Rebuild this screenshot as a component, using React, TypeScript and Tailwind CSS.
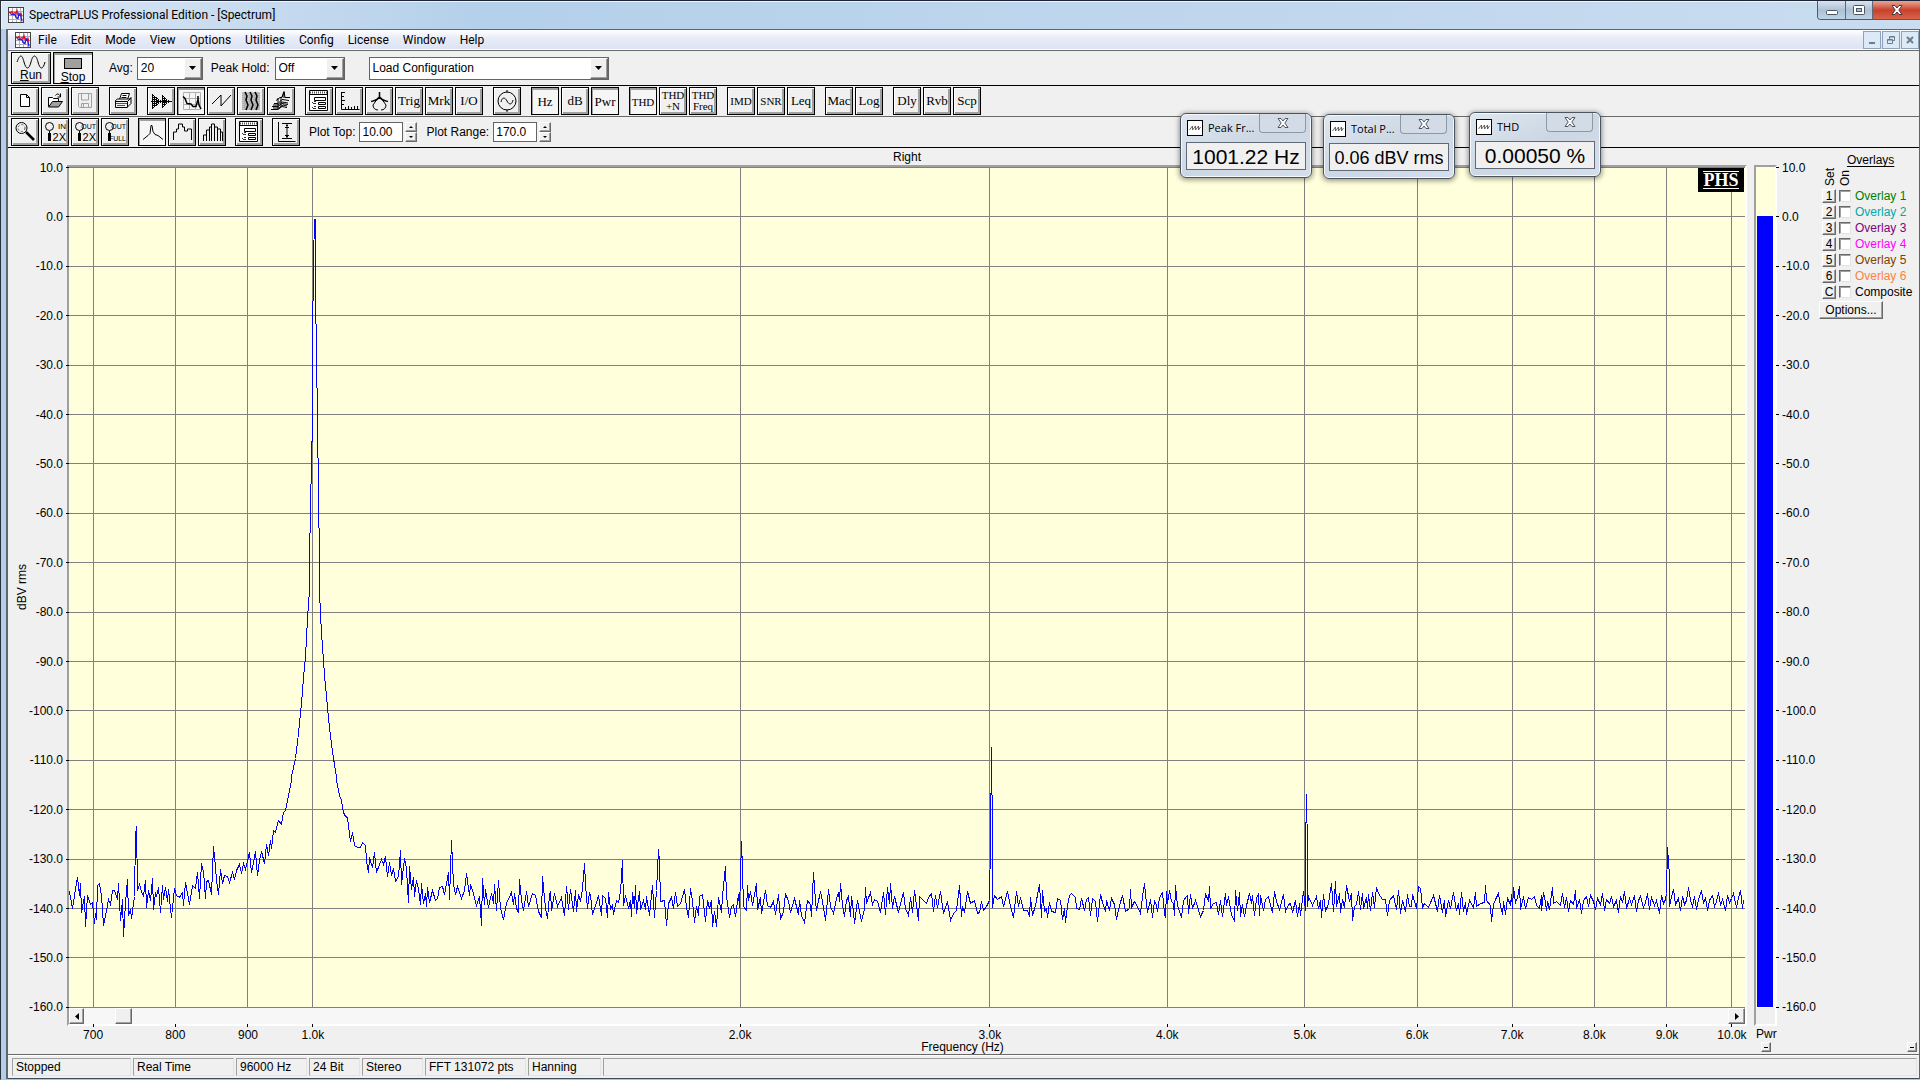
import type { ReactNode } from "react";

const MENUS = ["File", "Edit", "Mode", "View", "Options", "Utilities", "Config", "License", "Window", "Help"];

const OVERLAYS = [
  { key: "1", name: "Overlay 1", color: "text-[#008000]" },
  { key: "2", name: "Overlay 2", color: "text-[#00a8a8]" },
  { key: "3", name: "Overlay 3", color: "text-[#800080]" },
  { key: "4", name: "Overlay 4", color: "text-[#ff00ff]" },
  { key: "5", name: "Overlay 5", color: "text-[#804000]" },
  { key: "6", name: "Overlay 6", color: "text-[#ff8040]" },
  { key: "C", name: "Composite", color: "text-black" },
];

const STATUS = [
  { text: "Stopped", width: "w-[119px]" },
  { text: "Real Time", width: "w-[101px]" },
  { text: "96000 Hz", width: "w-[71px]" },
  { text: "24 Bit", width: "w-[51px]" },
  { text: "Stereo", width: "w-[61px]" },
  { text: "FFT 131072 pts", width: "w-[101px]" },
  { text: "Hanning", width: "w-[73px]" },
  { text: "", width: "flex-1" },
];

const FREQS = [
  { f: 0.7, label: "700" },
  { f: 0.8, label: "800" },
  { f: 0.9, label: "900" },
  { f: 1, label: "1.0k" },
  { f: 2, label: "2.0k" },
  { f: 3, label: "3.0k" },
  { f: 4, label: "4.0k" },
  { f: 5, label: "5.0k" },
  { f: 6, label: "6.0k" },
  { f: 7, label: "7.0k" },
  { f: 8, label: "8.0k" },
  { f: 9, label: "9.0k" },
  { f: 10, label: "10.0k" },
];

const LEVELS = Array.from({ length: 18 }, (_, i) => 10 - i * 10);

// log frequency axis, share of the plot width
const freqX = (f: number) => `${((243.9 + 1419 * Math.log10(f)) / 1676) * 100}%`;
const levelY = (i: number) => `${((i * 49.4 + 0.5) / 841) * 100}%`;

// measured trace, each block has its origin and points in thirds of a unit
const BLOCKS = [
  {
    x: -9,
    y: 613,
    pts: "25,328 30,348 37,385 42,345 53,292 58,346 61,310 65,397 73,350 77,440 83,346 90,372 98,368 103,430 106,400 109,418 113,316 117,310 124,346 131,436 138,390 146,357 151,372 158,332 164,331 172,358 175,310 181,420 186,357 191,470 196,370 202,298 206,405 211,387 215,415 222,350 225,170 229,140 232,330 238,312 245,335 250,348 256,302 260,382 264,332 270,360 276,295 281,388 285,338 289,350 295,322 301,397 306,317 311,357 316,322 322,365 326,328 335,412 343,325 348,345 358,352 366,338 370,375 376,307 383,340 389,373 398,317 406,326 412,277 418,355 425,250 430,275 435,355 440,305 445,300 454,344 460,198 465,262 468,300 475,343 480,268 486,310 494,287 502,290 507,307 518,278 524,297 530,270 538,253 543,280 551,250 556,268 568,217 575,277 580,246 586,213 592,287 598,240 605,213 613,250 618,193 626,226 632,180 635,205 639,152 647,157 654,120 664,132 670,98 677,92 685,45 694,0",
  },
  {
    x: 201,
    y: 393,
    pts: "65,650 77,595 85,520 95,430 100,352 107,290 113,175 117,90 119,0 122,-160 126,-420 128,-650 131,-900 132,-1022 135,-1022 136,-800 139,-620 141,-420 144,-200 149,0 149,95 152,160 155,220 161,300 164,345 170,410 176,475 182,530 190,595 200,650",
  },
  {
    x: -9,
    y: 613,
    pts: "829,0 838,45 845,60 850,98 855,110 862,113 868,160 872,185 877,157 884,197 893,203 900,203 906,187 916,197 920,240 925,277 929,232 936,262 942,217 950,277 963,238 970,253 977,229 983,290 989,247 994,285 1000,265 1007,303 1015,290 1020,210 1025,313 1032,236 1038,265 1041,320 1046,368 1049,260 1054,328 1060,292 1064,350 1070,300 1075,325 1082,372 1085,310 1090,370 1095,340 1099,380 1103,322 1108,367 1118,332 1127,362 1133,355 1138,322 1147,320 1153,343 1160,310 1165,277 1169,357 1175,180 1179,312 1186,342 1193,318 1203,355 1212,330 1220,280 1227,345 1232,312 1237,330 1250,375 1258,350 1264,436 1268,295 1273,372 1277,328 1284,382 1293,340 1300,370 1304,313 1308,392 1316,300 1322,385 1330,418 1338,370 1353,337 1359,372 1364,340 1370,385 1376,398 1379,297 1384,362 1390,390 1398,335 1405,380 1416,340 1427,345 1435,395 1444,412 1448,290 1455,385 1462,415 1467,345 1472,335 1475,390 1483,340 1492,380",
  },
  {
    x: 491,
    y: 673,
    pts: "3,172 12,227 19,138 25,208 31,148 40,215 45,150 50,215 54,162 60,185 67,145 72,70 76,132 82,205 87,157 92,165 98,222 108,187 116,167 125,227 128,165 137,175 143,233 146,158 150,208 158,193 161,223 170,180 175,187 182,155 187,60 190,197 196,165 205,205 210,182 215,230 218,157 224,203 227,135 230,220 238,155 242,207 250,180 256,207 260,170 269,226 276,135 284,232 290,150 295,27 298,65 302,185 312,182 319,255 325,190 334,172 340,205 345,157 352,200 362,190 374,148 380,203 386,233 391,145 397,185 404,248 410,200 415,225 419,168 428,163 436,243 442,182 448,205 454,182 458,260 464,215 469,260 475,172 484,217 488,168 496,80 500,170 508,232 514,200 521,193 527,230 535,162 539,203 542,110 544,5 547,90 551,200 558,210 563,135 566,180 572,155 577,197 588,130 593,207 600,173 605,220 616,150 622,195 632,203 640,185 646,223 654,163 662,237 670,215 675,160 684,185 690,217 702,176 708,200 714,222 718,180 724,225 734,247 741,180 750,192 755,230 760,97 765,180 770,210 782,155 787,185 797,240 805,148 812,200 820,220 828,175 834,157 838,183 842,130 848,195 854,230 860,180 865,170 871,228 874,168 880,215 884,250 893,180 898,215 905,243 912,205 916,142 920,190 930,157 936,193 944,178 953,185 960,217 971,157 977,222 983,142 987,190 992,130 998,205 1004,170 1014,217 1020,190 1031,157 1037,205 1046,225 1052,172 1058,218 1063,150 1076,240 1079,170 1090,182 1100,190 1104,172 1115,160 1121,213 1126,167 1133,202 1142,155 1150,220 1163,183 1172,242 1180,220 1190,210 1199,137 1204,228 1208,200 1214,217 1222,153 1230,190 1243,180 1253,220 1259,217 1264,185 1270,212 1280,200 1289,180 1291,0 1294,-278 1297,0 1298,202 1303,165 1312,178 1323,170 1330,200 1341,155 1350,200 1361,233 1370,153 1376,200 1382,172 1390,210 1402,212 1408,230 1412,172 1417,225 1427,195 1437,133 1443,232 1448,150 1453,215 1460,205 1463,232 1467,188 1475,215 1486,217 1493,175",
  },
  {
    x: 991,
    y: 613,
    pts: "0,362 8,418 13,385 17,428 22,375 28,347 34,340 45,352 50,385 58,387 65,355 72,390 78,358 86,352 92,407 98,355 105,365 113,425 121,343 128,367 136,395 140,360 147,392 155,355 164,372 170,418 178,375 187,347 197,393 208,385 211,328 215,382 222,365 228,372 240,400 248,348 253,310 258,370 263,397 271,357 277,412 282,360 288,375 293,395 297,352 306,337 312,400 317,412 320,333 323,370 328,330 335,365 340,370 343,405 347,316 352,375 364,412 370,362 378,350 382,345 386,400 391,343 397,385 406,362 412,380 421,408 430,390 436,340 446,365 448,318 452,385 460,370 470,367 476,402 480,360 487,410 496,340 500,375 505,350 514,402 524,425 526,330 532,390 537,337 542,410 548,372 553,410 560,375 569,340 574,370 578,346 584,407 590,355 596,340 599,405 601,345 610,390 617,357 626,348 631,375 637,398 643,333 650,365 658,387 670,342 677,395 685,372 690,370 697,397 706,360 712,410 718,370 721,407 730,335 736,390 737,215 739,42 742,215 743,378 746,348 757,375 769,350 775,385 780,362 784,412 790,342 797,395 805,370 814,310 820,393 826,303 830,378 838,340 842,398 846,358 852,382 860,315 868,365 874,340 878,420 884,378 890,372 896,335 901,388 906,340 910,386 918,352 922,385 926,343 931,392 938,337 943,383 949,322 954,340 968,357 975,357 982,405 988,360 1000,347 1010,387 1016,332 1021,400 1026,362 1036,395 1042,343 1048,378 1054,380 1058,343 1068,385 1075,318 1082,325 1087,382 1093,370 1105,382 1120,347 1131,395 1138,345 1147,397 1152,362 1157,410 1164,362 1172,385 1180,338 1188,390 1195,370 1199,402 1204,337 1209,395 1216,367 1220,402 1228,360 1240,382 1246,337 1250,378 1260,370 1272,367 1277,315 1280,362 1290,375 1294,425 1300,372 1307,358 1314,340 1320,375 1327,403 1331,363 1336,402 1342,352 1350,375 1354,343 1358,385 1360,322 1366,367 1372,352 1378,318 1382,387 1390,350 1396,385 1405,352 1413,357 1422,350 1430,375 1439,385 1443,345 1445,392 1450,337 1454,350 1458,392 1462,365 1468,387 1477,322 1481,370 1490,365 1500,375 1507,340 1513,382 1520,352 1526,395 1531,360 1540,372 1546,330 1550,385 1558,357 1565,400 1571,362 1580,350 1585,378 1592,345 1600,365 1606,388 1613,355 1621,372 1627,340 1634,392 1640,358 1648,370 1655,348 1660,380 1668,362 1674,397 1680,350 1688,366 1694,335 1700,385 1707,355 1715,372 1722,345 1728,395 1735,360 1742,350 1749,382 1755,366 1762,340 1769,388 1775,352 1783,375 1790,362 1797,400 1803,345 1810,370 1817,358 1820,340 1823,202 1827,290 1829,380 1834,350 1840,328 1847,372 1854,355 1860,390 1866,348 1873,372 1880,362 1885,322 1890,360 1897,378 1904,350 1910,388 1916,358 1923,330 1929,370 1936,352 1942,392 1949,360 1956,345 1962,380 1969,365 1975,337 1981,375 1988,358 1995,390 2001,345 2008,368 2015,355 2021,340 2028,382 2034,352 2041,330 2046,385 2050,360",
  },
];

const TRACE = BLOCKS.map((b) =>
  b.pts
    .split(" ")
    .map((p) => {
      const [x, y] = p.split(",").map(Number);
      return `${Math.floor(b.x + x / 3)},${Math.floor(b.y + y / 3)}`;
    })
    .join(" ")
).join(" ");

const RAISED = "border border-[#696969] border-l-white border-t-white bg-[#f0f0f0] shadow-[inset_-1px_-1px_0_#a0a0a0]";

function AppIcon() {
  return (
    <svg viewBox="0 0 16 16" className="h-4 w-4 shrink-0" aria-hidden>
      <rect x=".5" y=".5" width="15" height="15" fill="#fff" stroke="#444" />
      <path d="M4.500 1v14M8.500 1v14M12.500 1v14M1 4.500h14M1 8.500h14M1 12.500h14" stroke="#b0b0b0" />
      <path d="M1 5.500h2l1-1 1 2 2-1 1 1 1-3 1 4 2 1 1-2 1 3" fill="none" stroke="#e01030" strokeWidth="1.300" />
      <path d="M2 6.500l2 1h3l1 3 2 1 1-5 2 3 1 5" fill="none" stroke="#2020e0" strokeWidth="1.300" />
    </svg>
  );
}

function Tool({ label, active, children }: { label: string; active?: boolean; children: ReactNode }) {
  return (
    <button
      aria-label={label}
      className={`flex h-7 w-7 shrink-0 items-center justify-center border border-black font-['Liberation_Serif',serif] text-[13px] leading-3 text-black ${
        active
          ? "bg-[#f6f6f6] pt-0.5 shadow-[inset_1px_2px_0_#a0a0a0]"
          : "bg-[#f0f0f0] shadow-[inset_1px_1px_0_#fff,inset_-2px_-2px_0_#a0a0a0]"
      }`}
    >
      {children}
    </button>
  );
}

function Glyph({ children }: { children: ReactNode }) {
  return (
    <svg viewBox="0 0 24 24" className="h-6 w-6 shrink-0" fill="none" stroke="#000" aria-hidden>
      {children}
    </svg>
  );
}

const Small = ({ children }: { children: ReactNode }) => <span className="text-[11px]">{children}</span>;

const SettingsGlyph = () => (
  <Glyph>
    <path d="M2.500 1.500h18v20h-18zM2.500 5.500h18" fill="#fff" />
    <path d="M3 3.500h17" stroke="#555" strokeDasharray="1 1" strokeWidth="2" />
    <path d="M7.500 8.500h11v3h-11zM11.500 13.500h7v2h-7zM11.500 17.500h7v2h-7z" />
    <path d="M5 13.500h1M7 12.500h2M6 14.500h3M5 18.500h1M7 17.500h2M6 19.500h3" stroke="#333" />
  </Glyph>
);

function Zoomer({ top, bottom }: { top: string; bottom: string }) {
  return (
    <svg viewBox="0 0 24 24" className="h-6 w-6 shrink-0" aria-hidden>
      <circle cx="6.500" cy="6.500" r="4" fill="none" stroke="#000" />
      <path d="M6.500 11v2" stroke="#000" />
      <path d="M6.500 13v8" stroke="#000" strokeWidth="3" />
      <text x="23" y="9" textAnchor="end" fontSize={top === "IN" ? 8 : 7} fontFamily="Liberation Sans, sans-serif">
        {top}
      </text>
      <text
        x="23"
        y="21"
        textAnchor="end"
        fontSize={bottom === "2X" ? 11 : 7}
        fontFamily="Liberation Sans, sans-serif"
      >
        {bottom}
      </text>
    </svg>
  );
}

function Dropdown({ label, value, width }: { label: string; value: string; width: string }) {
  return (
    <span className={`relative block h-[23px] ${width}`}>
      <select
        aria-label={label}
        className="h-full w-full appearance-none border border-[#646464] bg-white pl-[3px] text-xs text-black focus:outline-none"
      >
        <option>{value}</option>
      </select>
      <span
        className={`pointer-events-none absolute right-px top-px flex h-[21px] w-[18px] items-center justify-center ${RAISED}`}
      >
        <svg viewBox="0 0 7 4" className="h-1 w-[7px]" aria-hidden>
          <path d="M0 0h7L3.500 4z" />
        </svg>
      </span>
    </span>
  );
}

function NumberBox({ label, value }: { label: string; value: string }) {
  return (
    <div className="flex items-center">
      <label className="flex items-center gap-1">
        {label}
        <input
          defaultValue={value}
          className="h-5 w-11 border border-[#646464] bg-white pl-0.5 text-xs focus:outline-none"
        />
      </label>
      <div className="ml-0.5 flex flex-col">
        <button aria-label={`${label} up`} className={`flex h-2.5 w-3 items-center justify-center ${RAISED}`}>
          <svg viewBox="0 0 4 2" className="h-0.5 w-1" aria-hidden>
            <path d="M0 2h4L2 0z" />
          </svg>
        </button>
        <button aria-label={`${label} down`} className={`flex h-2.5 w-3 items-center justify-center ${RAISED}`}>
          <svg viewBox="0 0 4 2" className="h-0.5 w-1" aria-hidden>
            <path d="M0 0h4L2 2z" />
          </svg>
        </button>
      </div>
    </div>
  );
}

function Readout({ title, value, place, size }: { title: string; value: string; place: string; size: string }) {
  return (
    <section
      className={`absolute h-[65px] w-[132px] rounded-md border border-[#4b5560] bg-linear-to-br from-[#dfe7ef] via-[#ccd7e4] to-[#d5dfeb] px-[5px] shadow-[inset_0_0_0_1px_#f4f8fc,0_1px_5px_1px_rgba(0,0,0,0.4)] ${place}`}
    >
      <div className="flex h-7 items-start gap-[5px]">
        <svg viewBox="0 0 16 16" className="ml-px mt-1.5 h-4 w-4 shrink-0" aria-hidden>
          <rect x=".5" y=".5" width="15" height="15" fill="#fff" stroke="#000" />
          <path d="M2.500 10l3-4v4l3-4v4l3-4v4l2-3" fill="none" stroke="#444" strokeWidth=".8" />
        </svg>
        <h2 className="mt-1.5 flex-1 whitespace-nowrap font-['Open_Sans',sans-serif] text-[11px] leading-4">{title}</h2>
        <button
          aria-label={`Close ${title}`}
          className="mr-0.5 flex h-[19px] w-[47px] shrink-0 items-center justify-center rounded-b border border-t-0 border-[#8c98a6] bg-[#d3dce6]"
        >
          <svg viewBox="0 0 12 10" className="h-2.5 w-3" aria-hidden>
            <path d="M1 .5h3l2 2.500 2-2.500h3L7.800 5l3.200 4.500h-3L6 7 4 9.500H1L4.200 5z" fill="#fff" stroke="#4c5563" />
          </svg>
        </button>
      </div>
      <output
        className={`flex h-7 items-center justify-center whitespace-nowrap border border-[#5f6a76] bg-[#f0f0f0] pt-px ${size}`}
      >
        {value}
      </output>
    </section>
  );
}

function LevelLabels({ side }: { side: "left" | "right" }) {
  return (
    <svg className="h-full w-full overflow-visible" shapeRendering="crispEdges">
      {LEVELS.map((v, i) => (
        <text
          key={v}
          x={side === "left" ? "100%" : 5}
          y={levelY(i)}
          dy="4"
          textAnchor={side === "left" ? "end" : "start"}
          fontSize="12"
        >
          {v.toFixed(1)}
        </text>
      ))}
      {side === "right" &&
        LEVELS.map((v, i) => <line key={v} x1="-1" x2="2" y1={levelY(i)} y2={levelY(i)} stroke="#000" />)}
    </svg>
  );
}

function Plot() {
  return (
    <svg className="block h-full w-full overflow-visible" shapeRendering="crispEdges" role="img" aria-label="Spectrum">
      {FREQS.map((t) => (
        <line key={t.label} x1={freqX(t.f)} x2={freqX(t.f)} y1="0" y2="100%" stroke="#808080" />
      ))}
      {LEVELS.map((v, i) => (
        <g key={v}>
          <line x1="0" x2="100%" y1={levelY(i)} y2={levelY(i)} stroke="#808080" />
          <line x1="-3" x2="0" y1={levelY(i)} y2={levelY(i)} stroke="#000" />
        </g>
      ))}
      <svg width="100%" height="100%" viewBox="0 0 1676 841" preserveAspectRatio="none">
        <polyline
          points={TRACE}
          transform="translate(.5 .5)"
          fill="none"
          stroke="#0000ff"
          vectorEffect="non-scaling-stroke"
        />
      </svg>
    </svg>
  );
}

function Collapse({ label }: { label: string }) {
  return (
    <button aria-label={label} className={`flex h-2.5 w-2.5 items-center justify-center ${RAISED}`}>
      <span className="h-px w-1 bg-black" />
    </button>
  );
}

export default function App() {
  return (
    <div className="relative flex min-h-screen flex-col border-b border-l border-t border-b-[#a9c6de] border-l-[#2a2f38] border-t-[#1c2433] bg-[#b4cde8] font-['Liberation_Sans',Arial,sans-serif] text-xs text-black">
      {/* title bar */}
      <header className="flex h-7 shrink-0 items-start bg-linear-to-r from-[#dbe7f4] via-[#b5d0eb] via-25% to-[#c9dcf0] pl-[7px] shadow-[inset_1px_1px_0_#eef5fc]">
        <div className="flex flex-1 items-center gap-[5px] pt-1.5">
          <AppIcon />
          <h1 className="font-[Roboto,sans-serif] text-xs leading-4">SpectraPLUS Professional Edition - [Spectrum]</h1>
        </div>
        <div className="flex h-[19px] overflow-hidden rounded-bl border-b border-l border-[#4d5b6c]">
          <button
            aria-label="Minimize"
            className="flex w-7 items-center justify-center border-r border-[#5b6a7c] bg-linear-to-b from-[#d7e4f1] via-[#adc1d6] to-[#bfd3e6]"
          >
            <svg viewBox="0 0 12 5" className="mt-1 h-[5px] w-3" aria-hidden>
              <rect x=".5" y=".5" width="11" height="4" rx="1" fill="#fff" stroke="#4c5563" />
            </svg>
          </button>
          <button
            aria-label="Restore"
            className="flex w-[27px] items-center justify-center border-r border-[#5b6a7c] bg-linear-to-b from-[#d7e4f1] via-[#adc1d6] to-[#bfd3e6]"
          >
            <svg viewBox="0 0 12 10" className="h-2.5 w-3" aria-hidden>
              <rect x=".5" y=".5" width="11" height="9" rx="1" fill="#fff" stroke="#4c5563" />
              <rect x="3.500" y="3.500" width="5" height="3" fill="#a9bdd3" stroke="#4c5563" />
            </svg>
          </button>
          <button
            aria-label="Close"
            className="flex w-[47px] items-center justify-center bg-linear-to-b from-[#e8a595] via-[#c8402a] to-[#d8644a]"
          >
            <svg viewBox="0 0 12 10" className="h-2.5 w-3" aria-hidden>
              <path d="M1 .5h3l2 2.500 2-2.500h3L7.800 5l3.200 4.500h-3L6 7 4 9.500H1L4.200 5z" fill="#fff" stroke="#4c3540" />
            </svg>
          </button>
        </div>
      </header>

      <div className="ml-[5px] flex flex-1 flex-col border-x border-l-2 border-t border-[#5c6670] bg-[#f0f0f0]">
        {/* menu bar */}
        <div className="flex h-5 shrink-0 items-center border-b border-white bg-linear-to-b from-white via-[#e9edf7] via-40% to-[#dde3f3] pl-[7px]">
          <AppIcon />
          <nav className="flex flex-1 font-[Roboto,sans-serif] leading-4">
            {MENUS.map((m) => (
              <button key={m} className="px-[7px]">
                {m}
              </button>
            ))}
          </nav>
          <div className="flex gap-px text-[#6b7d90]">
            <button
              aria-label="Minimize child"
              className="flex h-[18px] w-[18px] items-center justify-center border border-[#8fa3b8] bg-[#dce9f6]"
            >
              <span className="mt-1.5 h-0.5 w-1.5 bg-[#6b7d90]" />
            </button>
            <button
              aria-label="Restore child"
              className="flex h-[18px] w-[18px] items-center justify-center border border-[#8fa3b8] bg-[#dce9f6]"
            >
              <svg viewBox="0 0 8 8" className="h-2 w-2" fill="none" stroke="currentColor" aria-hidden>
                <path d="M.5 3.500h5v4h-5zM.5 4h5M2.500 3V.5h5v4H6M2.500 1h5" />
              </svg>
            </button>
            <button
              aria-label="Close child"
              className="flex h-[18px] w-[18px] items-center justify-center border border-[#8fa3b8] bg-[#dce9f6]"
            >
              <svg viewBox="0 0 8 8" className="h-2 w-2" stroke="currentColor" strokeWidth="2" aria-hidden>
                <path d="M1 1l6 6M7 1L1 7" />
              </svg>
            </button>
          </div>
        </div>

        {/* run controls */}
        <div className="flex h-9 shrink-0 items-center border-b border-t border-b-black border-t-[#6b6b6b] pl-[3px]">
          <button className="flex h-8 w-10 flex-col items-center justify-end border border-black bg-[#f0f0f0] leading-3 shadow-[inset_1px_1px_0_#fff,inset_-2px_-2px_0_#a0a0a0]">
            <svg viewBox="0 0 30 14" className="h-3.5 w-[30px]" fill="none" stroke="#000" aria-hidden>
              <path d="M1 7C4-1 6-1 8 7s5 8 7 0 5-8 7 0 5 8 7 0" />
            </svg>
            <span className="mb-0.5">
              <u>R</u>un
            </span>
          </button>
          <button className="ml-0.5 flex h-8 w-10 flex-col items-center justify-end border border-black bg-[#f6f6f6] leading-3 shadow-[inset_1px_2px_0_#a0a0a0]">
            <span className="mb-0.5 h-[11px] w-[18px] border border-black bg-[#a0a0a0]" />
            <span>
              <u>S</u>top
            </span>
          </button>
          <span className="ml-4 mr-1">Avg:</span>
          <Dropdown label="Avg" value="20" width="w-[66px]" />
          <span className="ml-2 mr-[5px]">Peak Hold:</span>
          <Dropdown label="Peak Hold" value="Off" width="w-[70px]" />
          <span className="w-6" />
          <Dropdown label="Configuration" value="Load Configuration" width="w-[240px]" />
        </div>

        {/* main tools */}
        <div className="flex h-[31px] shrink-0 items-center gap-2.5 border-b border-[#696969] pl-[3px]">
          <div className="flex gap-0.5">
            <Tool label="New">
              <Glyph>
                <path d="M7.500 5.500h6l3 3v9h-9zM13.500 5.500v3h3" fill="#fff" />
              </Glyph>
            </Tool>
            <Tool label="Open">
              <Glyph>
                <path d="M5.500 17.500v-9h4l1 1h5v3" fill="#fff" />
                <path d="M5.500 18l4-5.500h10l-4 5.500z" fill="#a0a0a0" />
                <path d="M12.500 6.500c2-3 4-1 5 1m0-3v3.500h-3" />
              </Glyph>
            </Tool>
            <Tool label="Save">
              <Glyph>
                <path d="M5.500 4.500h13v14h-12l-1-1z" stroke="#a0a0a0" />
                <path d="M8.500 5v6h7V5M8.500 18.500v-4h7v4M10.500 15v3" stroke="#a0a0a0" />
              </Glyph>
            </Tool>
          </div>
          <Tool label="Print">
            <Glyph>
              <path d="M8.500 10.500l2-6h8l-2 6" fill="#fff" />
              <path d="M11.500 6.500h4M10.500 8.500h5" />
              <path d="M4.500 11.500l2-1.500h12l1.500-1.500v6l-4 4h-11.500z" fill="#f0f0f0" />
              <path d="M4.500 12.500h12v6M16.500 12.500l3.500-3.500" />
              <path d="M5 14.500h11M6 16.500h8" stroke="#555" />
            </Glyph>
          </Tool>
          <div className="flex gap-0.5">
            <Tool label="Time series">
              <Glyph>
                <path d="M2 12.500h21" />
                <path d="M3.500 5v15M5.500 7v11M7.500 8v9M9.500 10v5M11.500 11v3M13.500 6v13M15.500 8v9M17.500 10v5M19.500 11v3" />
                <path d="M4.500 6v13M6.500 8v9M8.500 9v7M14.500 7v11M16.500 9v7" strokeDasharray="1 1" />
              </Glyph>
            </Tool>
            <Tool label="Spectrum" active>
              <Glyph>
                <path d="M4.500 2.500h17v17h-17zM10.500 3v16M16.500 3v16M5 8.500h16M5 14.500h16" stroke="#b0b0b0" />
                <path d="M4 6.500l2 2 2 5 4 .5 2 2.500h3l2-7V6M19 9l1 6 2 4" strokeWidth="1.500" />
              </Glyph>
            </Tool>
            <Tool label="Phase">
              <Glyph>
                <path d="M3 15L12 6v11L22 6" />
              </Glyph>
            </Tool>
            <Tool label="Spectrogram">
              <Glyph>
                <path d="M3 3h18v18H3z" fill="#b0b0b0" stroke="none" />
                <path d="M4 3v18M9 3v18M14 3v18M20 3v18" stroke="#dcdcdc" strokeDasharray="1 1" />
                <path d="M6 3l2 4-1 4 2 5-2 5M11 3l2 4-1 4 2 5-2 5M16 3l2 4-1 4 2 5-2 5" strokeWidth="1.500" />
              </Glyph>
            </Tool>
            <Tool label="3-D surface">
              <Glyph>
                <path d="M2 20.500h7l4-3 5 1M3 17.500h6l4-3 6 1M5 14.500h4l4-4 7 1M7 11.500l4-3h2l2-6 1 6h5M9 9v11M12 8v10" />
                <path d="M4 19h6l4-3 4 1M4 16h5l4-3 6 1M13 8l2-5v6" />
              </Glyph>
            </Tool>
          </div>
          <div className="flex gap-0.5">
            <Tool label="Settings">
              <SettingsGlyph />
            </Tool>
            <Tool label="Scaling">
              <Glyph>
                <path d="M4.500 3v17.500h18M5 3.500h3M5 7.500h2M5 11.500h3M5 15.500h2M8.500 20v-2M11.500 20v-3M14.500 20v-2M17.500 20v-3M20.500 20v-3" />
              </Glyph>
            </Tool>
            <Tool label="Calibration">
              <Glyph>
                <path d="M12.500 3v5M4 12.500c4-1 6-1 8.500-4.500 2.500 3.500 4.500 3.500 8.500 4.500" strokeWidth="1.500" />
                <path d="M11 9l-5 7c0 3 2 5 5 5M14 9l5 7c0 3-2 5-5 5" />
              </Glyph>
            </Tool>
            <Tool label="Trigger">Trig</Tool>
            <Tool label="Markers">Mrk</Tool>
            <Tool label="Input output">I/O</Tool>
          </div>
          <Tool label="Signal generator">
            <Glyph>
              <circle cx="12" cy="12" r="9" />
              <path d="M6 13c1-5 4-5 6-1s5 4 6-1M12 1v2.500M12 20.500V23" />
            </Glyph>
          </Tool>
          <div className="flex gap-0.5">
            <Tool label="Peak frequency" active>
              Hz
            </Tool>
            <Tool label="Peak amplitude">dB</Tool>
            <Tool label="Total power" active>
              Pwr
            </Tool>
          </div>
          <div className="flex gap-0.5">
            <Tool label="THD" active>
              <Small>THD</Small>
            </Tool>
            <Tool label="THD plus noise">
              <span className="text-[11px] leading-[11px]">
                THD
                <br />
                +N
              </span>
            </Tool>
            <Tool label="THD versus frequency">
              <span className="text-[11px] leading-[11px]">
                THD
                <br />
                Freq
              </span>
            </Tool>
          </div>
          <div className="flex gap-0.5">
            <Tool label="IMD">
              <Small>IMD</Small>
            </Tool>
            <Tool label="SNR">
              <Small>SNR</Small>
            </Tool>
            <Tool label="Leq">Leq</Tool>
          </div>
          <div className="flex gap-0.5">
            <Tool label="Macro">Mac</Tool>
            <Tool label="Logging">Log</Tool>
          </div>
          <div className="flex gap-0.5">
            <Tool label="Delay finder">Dly</Tool>
            <Tool label="Reverb">Rvb</Tool>
            <Tool label="Scope">Scp</Tool>
          </div>
        </div>

        {/* plot tools */}
        <div className="flex h-[31px] shrink-0 items-center gap-[9px] border-b border-black pl-[3px]">
          <div className="flex gap-0.5">
            <Tool label="Zoom">
              <Glyph>
                <circle cx="8.500" cy="8" r="5.500" />
                <circle cx="8.500" cy="8" r="3.500" strokeDasharray="2 2" stroke="#555" />
                <path d="M13 12l8 8" strokeWidth="2.500" />
              </Glyph>
            </Tool>
            <Tool label="Zoom in 2X">
              <Zoomer top="IN" bottom="2X" />
            </Tool>
            <Tool label="Zoom out 2X">
              <Zoomer top="OUT" bottom="2X" />
            </Tool>
            <Tool label="Zoom out full">
              <Zoomer top="OUT" bottom="FULL" />
            </Tool>
          </div>
          <div className="flex gap-0.5">
            <Tool label="Line" active>
              <Glyph>
                <path d="M3 18.500l5-4 2-2 1-8 1 0 1 6 2 3 3 1 5 4" />
              </Glyph>
            </Tool>
            <Tool label="Octave">
              <Glyph>
                <path d="M3.500 20v-8h3v-3h2v-5h4v3h2v4h3v-2h4v11" />
              </Glyph>
            </Tool>
            <Tool label="Bars">
              <Glyph>
                <path d="M3.500 21v-6h3v-5h3v-3h2v-3h3v3h3v2h3v3h2v9M6.500 15v6M9.500 10v11M11.500 7v14M14.500 7v14M17.500 9v12M20.500 12v9" />
              </Glyph>
            </Tool>
          </div>
          <Tool label="Plot settings">
            <SettingsGlyph />
          </Tool>
          <Tool label="Autoscale">
            <Glyph>
              <path d="M4.500 2v19.500h17M8 3.500h10M8 18.500h10M13 4v14M11 7.500h4M12 5.500h2M11 15.500h4M12 16.500h2" />
            </Glyph>
          </Tool>
          <NumberBox label="Plot Top:" value="10.00" />
          <NumberBox label="Plot Range:" value="170.0" />
        </div>

        {/* spectrum view */}
        <main className="flex flex-1">
          <div className="flex w-[59px] shrink-0 pb-8 pr-1 pt-[19px]">
            <div className="flex w-7 shrink-0 items-center justify-center">
              <span className="rotate-180 whitespace-nowrap [writing-mode:vertical-rl]">dBV rms</span>
            </div>
            <div className="flex-1">
              <LevelLabels side="left" />
            </div>
          </div>

          <div className="flex flex-1 flex-col">
            <h2 className="h-[17px] text-center leading-[18px]">Right</h2>
            <div className="flex flex-1 flex-col border-2 border-b-white border-l-[#a0a0a0] border-r-white border-t-[#a0a0a0]">
              <div className="relative flex-1 bg-[#ffffdc]">
                <div className="absolute inset-0">
                  <Plot />
                </div>
                <div className="absolute right-px top-px flex h-6 w-[46px] items-center justify-center bg-black">
                  <span className="border-y border-white font-['Liberation_Serif',serif] text-lg font-bold leading-4 text-white">
                    PHS
                  </span>
                </div>
              </div>
              <div className="flex h-4 bg-[#f7f7f7]">
                <button aria-label="Scroll left" className={`flex w-[15px] items-center justify-center ${RAISED}`}>
                  <svg viewBox="0 0 4 7" className="h-[7px] w-1" aria-hidden>
                    <path d="M4 0v7L0 3.500z" />
                  </svg>
                </button>
                <div className="flex-1 pl-[31px]">
                  <div className={`h-4 w-[17px] ${RAISED}`} />
                </div>
                <button aria-label="Scroll right" className={`flex w-[17px] items-center justify-center ${RAISED}`}>
                  <svg viewBox="0 0 4 7" className="h-[7px] w-1" aria-hidden>
                    <path d="M0 0v7l4-3.500z" />
                  </svg>
                </button>
              </div>
            </div>
            <div className="h-3.5 px-0.5">
              <svg className="h-full w-full overflow-visible">
                {FREQS.map((t) => (
                  <g key={t.label}>
                    <line x1={freqX(t.f)} x2={freqX(t.f)} y1="-2" y2="1" stroke="#000" shapeRendering="crispEdges" />
                    <text x={freqX(t.f)} y="13" textAnchor="middle" fontSize="12">
                      {t.label}
                    </text>
                  </g>
                ))}
              </svg>
            </div>
          </div>

          {/* power meter */}
          <div className="ml-[7px] flex w-[23px] flex-col pt-[17px]">
            <div className="flex flex-1 flex-col border-2 border-b-white border-l-[#a0a0a0] border-r-white border-t-[#a0a0a0]">
              <div className="flex flex-1 flex-col bg-[#ffffdc]">
                <div className="flex-1" />
                <div className="ml-px mr-0.5 basis-[94.2%] bg-[#0000ff]" />
              </div>
              <div className="h-[17px] border-t border-white bg-[#f0f0f0]" />
            </div>
            <span className="h-3.5 pl-0.5 leading-[17px]">Pwr</span>
          </div>
          <div className="w-[42px] pb-8 pt-[19px]">
            <LevelLabels side="right" />
          </div>

          {/* overlays */}
          <aside className="w-[100px] pt-1">
            <h2 className="ml-7 leading-4 underline underline-offset-2">Overlays</h2>
            <div className="mb-0.5 ml-1 flex h-[18px] items-end gap-px">
              <span className="rotate-180 leading-[14px] [writing-mode:vertical-rl]">Set</span>
              <span className="rotate-180 leading-[14px] [writing-mode:vertical-rl]">On</span>
            </div>
            {OVERLAYS.map((o) => (
              <div key={o.key} className="flex h-4 items-center">
                <button
                  aria-label={`Set ${o.name}`}
                  className={`ml-[3px] flex h-3.5 w-3.5 items-center justify-center leading-3 ${RAISED}`}
                >
                  {o.key}
                </button>
                <label className={`flex items-center gap-1 whitespace-nowrap pl-[3px] ${o.color}`}>
                  <input
                    type="checkbox"
                    className="h-3 w-3 appearance-none border border-[#e3e3e3] border-l-[#696969] border-t-[#696969] bg-white shadow-[inset_1px_1px_0_#a0a0a0]"
                  />
                  {o.name}
                </label>
              </div>
            ))}
            <button className={`mt-px block h-[18px] w-16 leading-4 ${RAISED}`}>Options...</button>
          </aside>
        </main>

        <div className="flex h-3.5 shrink-0 items-center">
          <div className="flex-1" />
          <span className="leading-3.5">Frequency (Hz)</span>
          <div className="flex flex-1 justify-end gap-34 pr-0.5">
            <Collapse label="Collapse meter" />
            <Collapse label="Collapse overlays" />
          </div>
        </div>

        {/* status bar */}
        <footer className="flex h-[25px] shrink-0 gap-0.5 border-b border-t border-b-[#3c4d5e] border-t-[#696969] pb-0.5 pl-1 pr-0.5 pt-[3px] shadow-[inset_0_1px_0_#fff]">
          {STATUS.map((s, i) => (
            <div
              key={i}
              className={`border border-[#e3e3e3] border-l-[#a0a0a0] border-t-[#a0a0a0] pl-[3px] leading-4 ${s.width}`}
            >
              {s.text}
            </div>
          ))}
        </footer>
      </div>

      {/* floating readouts */}
      <Readout title="Peak Fr..." value="1001.22 Hz" place="left-[1179px] top-[112px]" size="text-[21px]" />
      <Readout title="Total P..." value="0.06 dBV rms" place="left-[1322px] top-[113px]" size="text-lg" />
      <Readout title="THD" value="0.00050 %" place="left-[1468px] top-[111px]" size="text-[21px]" />
    </div>
  );
}
